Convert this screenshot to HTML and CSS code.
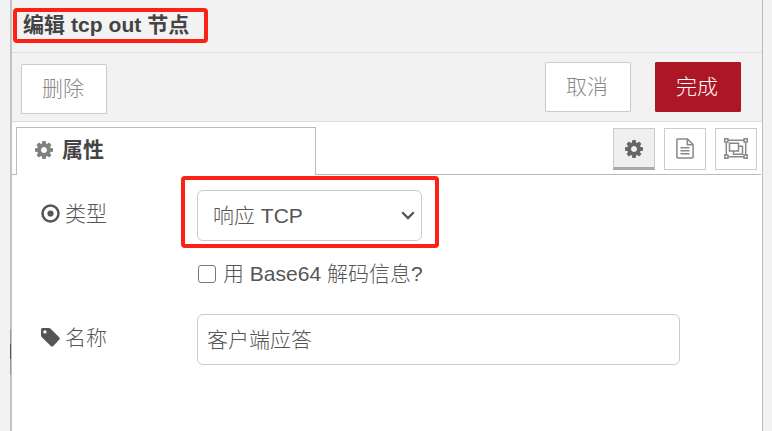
FILE: index.html
```html
<!DOCTYPE html>
<html lang="zh-CN">
<head>
<meta charset="utf-8">
<title>编辑 tcp out 节点</title>
<link rel="stylesheet" href="styles.css">
</head>
<body>
<svg class="defs" aria-hidden="true">
  <symbol id="gear" viewBox="0 128 1536 1536"><path d="M1024 896q0-106-75-181t-181-75-181 75-75 181 75 181 181 75 181-75 75-181zm512-109v222q0 12-8 23t-20 13l-185 28q-19 54-39 91 35 50 107 138 10 12 10 25t-9 23q-27 37-99 108t-94 71q-12 0-26-9l-138-108q-44 23-91 38-16 136-29 186-7 28-36 28h-222q-14 0-24.500-8.500t-11.500-21.500l-28-184q-49-16-90-37l-141 107q-10 9-25 9-14 0-25-11-126-114-165-168-7-10-7-23 0-12 8-23 15-21 51-66.500t54-70.500q-27-50-41-99l-183-27q-13-2-21-12.500t-8-23.500v-222q0-12 8-23t19-13l186-28q14-46 39-92-40-57-107-138-10-12-10-24 0-10 9-23 26-36 98.500-107.500t94.500-71.500q13 0 26 10l138 107q44-23 91-38 16-136 29-186 7-28 36-28h222q14 0 24.500 8.500t11.500 21.500l28 184q49 16 90 37l142-107q9-9 24-9 13 0 25 10 129 119 165 170 7 8 7 22 0 12-8 23-15 21-51 66.500t-54 70.500q26 50 41 98l183 28q13 2 21 12.500t8 23.500z"/></symbol>
</svg>
<div class="workspace">
  <div class="gutter"><span class="node-edge"></span></div>
  <main class="tray">
    <header class="tray-header"><h1 class="title">编辑 tcp out 节点</h1></header>
    <div class="toolbar">
      <button class="btn btn-delete">删除</button>
      <button class="btn btn-cancel">取消</button>
      <button class="btn btn-done">完成</button>
    </div>
    <nav class="tabs">
      <div class="tab"><svg class="icon"><use href="#gear"/></svg><span>属性</span></div>
      <div class="tab-buttons">
        <button class="tab-button selected" aria-label="属性"><svg class="icon"><use href="#gear"/></svg></button>
        <button class="tab-button" aria-label="描述">
          <svg class="icon-doc" viewBox="0 0 18 21"><path d="M1.700 .9H11.500L17.100 6.500V19.100Q17.100 20.100 16.100 20.100H1.900Q.9 20.100 .9 19.100V1.700Q.9 .9 1.700 .9ZM11.300 1V6.700H17M4.500 9.800H13.500M4.500 12.800H13.500M4.500 15.800H13.500"/></svg>
        </button>
        <button class="tab-button" aria-label="外观">
          <svg class="icon-group" viewBox="0 0 24 21"><path d="M4 2.200H20M4 18.800H20M2.300 4V17M21.700 4V17M.7 .7H3.900V3.900H.7ZM20.100 .7H23.300V3.900H20.100ZM.7 17.100H3.900V20.300H.7ZM20.100 17.100H23.300V20.300H20.100ZM5.500 5.200H14.500V13H5.500ZM14.500 8.200H18.500V16.200H9.500V13"/></svg>
        </button>
      </div>
    </nav>
    <form class="form">
      <div class="row row-type">
        <label class="label"><svg class="icon target" viewBox="0 0 19 19"><circle class="ring" cx="9.500" cy="9.500" r="8"/><circle cx="9.500" cy="9.500" r="3.100"/></svg><span class="label-text">类型</span></label>
        <div class="select"><span>响应 TCP</span><svg class="chevron" viewBox="0 0 14 9"><path d="M1.200 1.300 7 7.100 12.800 1.300"/></svg></div>
      </div>
      <div class="row row-check"><span class="checkbox"></span><span>用 Base64 解码信息?</span></div>
      <div class="row row-name">
        <label class="label"><svg class="icon tag" viewBox="0 0 18 18"><path fill-rule="evenodd" d="M1.500 0H7.200Q8.300 0 9.200 .8L17.400 9Q18.300 10 17.400 10.900L11.400 17.200Q10.500 18 9.500 17.200L.8 8.700Q0 7.900 0 6.900V1.500Q0 0 1.500 0ZM3.700 2.100A1.600 1.600 0 1 0 3.700 5.300A1.600 1.600 0 1 0 3.700 2.100Z"/></svg><span class="label-text">名称</span></label>
        <div class="input">客户端应答</div>
      </div>
    </form>
    <div class="mark mark-title"></div>
    <div class="mark mark-type"></div>
  </main>
</div>
</body>
</html>
```
FILE: styles.css
```css
* { box-sizing: border-box; }
body {
  margin: 0;
  height: 431px;
  overflow: hidden;
  background: #f2f2f2;
  color: #555;
  font: 300 21px/30px "Liberation Sans", "Noto Sans CJK SC", sans-serif;
}
svg { display: block; flex: none; fill: currentColor; }
.defs { display: none; }
.workspace { display: flex; height: 431px; }
.gutter {
  width: 12px;
  padding-top: 329px;
  border-right: 2px solid #c3c3c3;
}
.node-edge {
  display: block;
  width: 1px;
  height: 46px;
  margin-left: 10px;
  background: linear-gradient(#8ba18b 0 15px, #555 15px 30px, #8ba18b 30px);
}
.tray {
  position: relative;
  width: 751px;
  border-right: 1px solid #bbb;
  background: #fff;
}
.tray-header {
  height: 53px;
  padding: 10px 0 0 11px;
  border-bottom: 1px solid #ddd;
  background: #f2f2f2;
}
.title { margin: 0; font-size: 21px; line-height: 30px; letter-spacing: .06px; color: #444; }
.toolbar {
  display: flex;
  align-items: flex-start;
  gap: 24px;
  height: 69px;
  padding: 9px 21px 0 9px;
  border-bottom: 1px solid #ddd;
  background: #f2f2f2;
}
.btn {
  width: 86px;
  height: 50px;
  padding: 0 2px 0 0;
  border: 1px solid #ccc;
  border-radius: 1px;
  background: #fff;
  color: #888;
  font: inherit;
}
.btn-delete { margin: 2px auto 0 0; }
.btn-done { border-color: #ad1625; background: #ad1625; color: #fff; }
.tabs { display: flex; height: 53px; padding: 5px 1px 0 0; }
.tabs::before { content: ""; width: 4px; border-bottom: 1px solid #bbb; }
.tab {
  display: flex;
  align-items: center;
  gap: 9px;
  width: 300px;
  padding: 0 0 4px 18px;
  border: 1px solid #bbb;
  border-bottom: 0;
  color: #444;
  font-weight: bold;
}
.icon { width: 18px; height: 18px; }
.tab .icon { color: #808080; }
.tab-buttons {
  display: flex;
  flex: 1;
  justify-content: flex-end;
  gap: 9px;
  padding: 1px 4px 0 0;
  border-bottom: 1px solid #bbb;
}
.tab-button {
  display: flex;
  align-items: center;
  justify-content: center;
  width: 42px;
  height: 42px;
  padding: 0 0 1px;
  border: 1px solid #ccc;
  background: #fff;
  color: #888;
}
.selected { padding: 1px 0 0; border-bottom: 3px solid #aaa; background: #efefef; color: #666; }
.icon-doc { width: 18px; height: 21px; }
.icon-group { width: 24px; height: 21px; }
.icon-doc path, .icon-group path { fill: none; stroke: currentColor; stroke-width: 1.5; }
.form { padding: 15px 0 0 29px; }
.row { display: flex; }
.label { display: flex; align-items: center; gap: 5px; width: 156px; height: 46px; }
.label-text { padding-top: 2px; }
.target { width: 19px; height: 19px; }
.target .ring { fill: none; stroke: currentColor; stroke-width: 2.500; }
.tag { width: 19px; height: 19px; }
.select, .input {
  display: flex;
  align-items: center;
  height: 51px;
  border: 1px solid #ccc;
  border-radius: 6px;
}
.select { justify-content: space-between; width: 225px; padding: 0 6px 0 15px; }
.chevron { width: 14px; height: 9px; }
.chevron path { fill: none; stroke: #555; stroke-width: 2.300; }
.row-check { align-items: center; gap: 7px; height: 30px; margin-top: 18px; padding-left: 157px; }
.checkbox { width: 18px; height: 18px; border: 1.5px solid #777; border-radius: 3px; }
.row-name { margin-top: 25px; }
.input { width: 483px; padding-left: 9px; }
.mark { position: absolute; border: 4px solid #ff2015; border-radius: 4px; pointer-events: none; }
.mark-title { left: 1px; top: 8px; width: 195px; height: 35px; }
.mark-type { left: 169px; top: 176px; width: 258px; height: 72px; }
```
